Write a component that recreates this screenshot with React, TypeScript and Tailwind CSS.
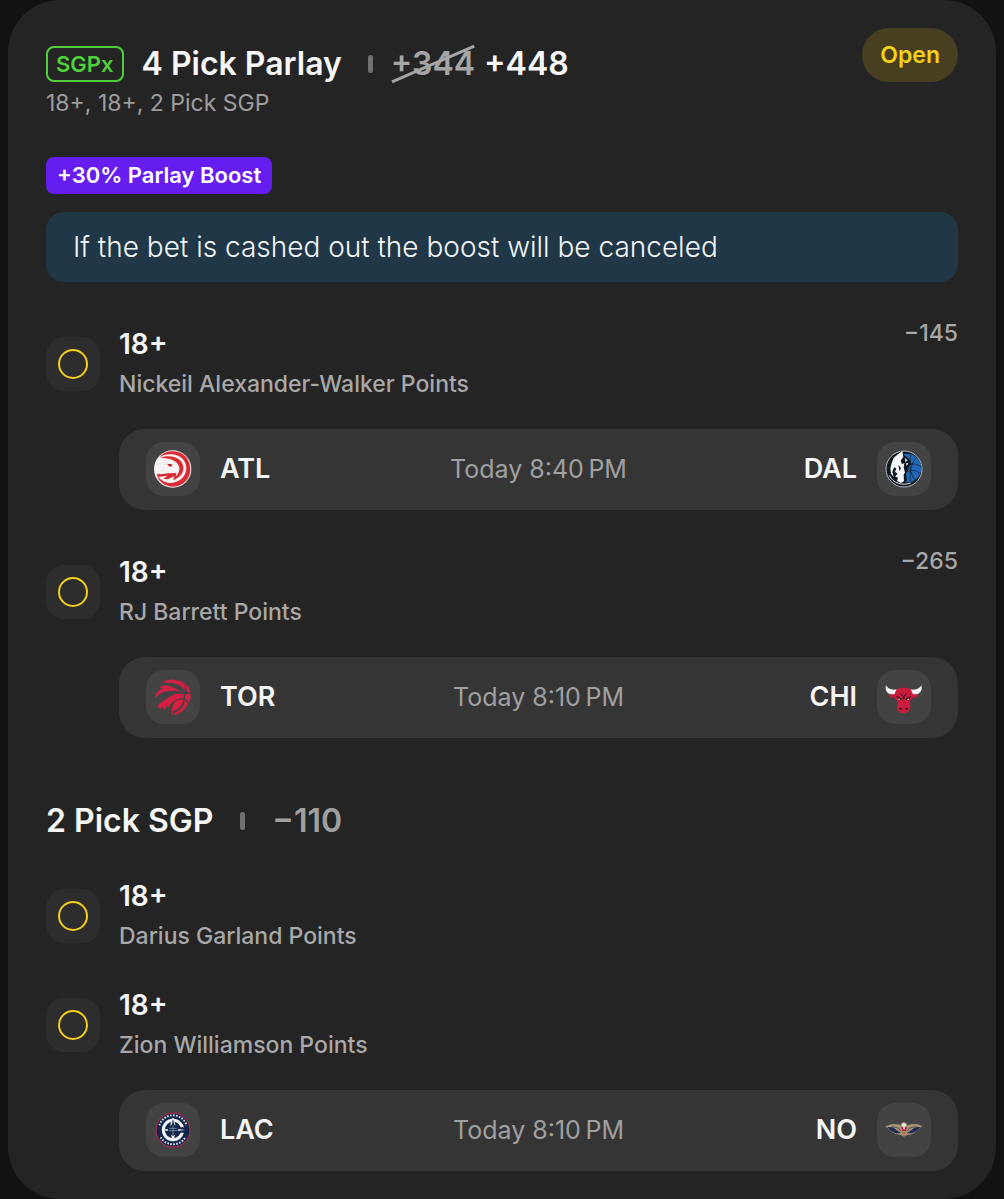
import type { ReactNode } from 'react';

type TeamCode = 'ATL' | 'DAL' | 'TOR' | 'CHI' | 'LAC' | 'NO';

interface Game {
  away: TeamCode;
  home: TeamCode;
  time: string;
}

interface Leg {
  pick: string;
  market: string;
  odds?: string;
  game?: Game;
}

const singles: Leg[] = [
  {
    pick: '18+',
    market: 'Nickeil Alexander-Walker Points',
    odds: '−145',
    game: { away: 'ATL', home: 'DAL', time: 'Today 8:40\u202fPM' },
  },
  {
    pick: '18+',
    market: 'RJ Barrett Points',
    odds: '−265',
    game: { away: 'TOR', home: 'CHI', time: 'Today 8:10\u202fPM' },
  },
];

const sgpLegs: Leg[] = [
  { pick: '18+', market: 'Darius Garland Points' },
  {
    pick: '18+',
    market: 'Zion Williamson Points',
    game: { away: 'LAC', home: 'NO', time: 'Today 8:10\u202fPM' },
  },
];

// All logos share the same 162x162 artboard, centred on 101,102.
const logos: Record<TeamCode, ReactNode> = {
  ATL: (
    <>
      <circle cx="100" cy="102" r="56" fill="#f6f2f2" />
      <path
        d="M60 67 C71 53 87 48 103 49 C132 50 153 73 153 103 C153 132 130 155 101 155 C79 155 61 143 53 124 L60 129 C69 139 81 144 95 144 C121 143 141 124 141 100 C141 76 122 59 97 58 C83 57 70 60 60 67Z"
        fill="#dc2a33"
      />
      <path
        d="M64 68 C98 56 131 72 132 97 C133 116 122 127 102 136 L105 123 L86 133 L72 131 L85 122 L57 126 C53 122 53 119 54 116 C68 120 78 114 92 115 L111 114 L109 124 C116 118 121 109 120 99 C118 82 102 70 64 68Z"
        fill="#dc2a33"
      />
      <path d="M83 86 L99 88 L96 95 L89 94Z" fill="#c5202d" />
    </>
  ),
  DAL: (
    <>
      <circle cx="101" cy="102" r="55" fill="#101820" />
      <circle cx="101" cy="102" r="54" fill="none" stroke="#b8bec4" strokeWidth="3" />
      <circle cx="110" cy="99" r="43" fill="#2069b8" />
      <path
        d="M122 59 C116 76 117 120 135 134 M139 68 C125 80 117 104 120 139 M111 92 C125 84 140 86 153 96 M111 111 C125 102 139 107 148 115"
        fill="none"
        stroke="#101820"
        strokeWidth="2"
      />
      <path
        d="M92 49 L102 61 L119 74 L123 88 L116 94 L113 107 L107 116 L110 136 L99 149 L78 144 L62 130 L52 107 L57 80 L72 62Z"
        fill="#101820"
      />
      <path
        d="M96 48 L99 65 L91 77 L95 88 L102 84 L100 98 L104 112 L100 120 L101 139 L92 144 L80 138 L83 128 L74 124 L82 117 L74 110 L78 101 L72 96 L66 110 L70 126 L62 116 L60 100 L64 84 L70 68 L83 58Z"
        fill="#f6f7f8"
      />
      <path d="M103 68 L112 76 L105 82Z M108 84 L115 85 L108 94Z" fill="#c9ced3" />
      <path d="M84 90 L92 98 L88 109Z" fill="#101820" />
      <path d="M57 121 C67 145 98 153 121 144" fill="none" stroke="#e0e4e8" strokeWidth="3" />
    </>
  ),
  TOR: (
    <g fill="#d31f42">
      <path d="M46 108 C49 86 60 80 70 77 L61 72 C72 66 84 67 96 71 C108 75 116 79 123 86 C94 80 63 83 46 108Z" />
      <path d="M65 59 C90 44 114 48 130 60 C137 66 139 74 136 84 C127 66 105 56 65 59Z" />
      <path d="M120 51 C140 59 151 74 154 90 L143 87 C144 73 136 60 120 51Z" />
      <path d="M55 128 C62 118 80 110 95 99 C108 91 122 90 134 93 L132 106 C116 105 104 113 91 126 L92 134 L82 130 L75 140 L68 132 L59 137Z" />
      <path d="M139 92 L154 94 C155 103 152 113 148 119 L137 107Z" />
      <path d="M107 116 C116 108 124 109 132 111 C131 125 119 138 100 146 L105 157 L96 151 C99 136 99 124 107 116Z" />
      <path d="M136 112 L146 123 C138 141 121 153 105 156 L107 148 C123 142 135 130 136 112Z" />
    </g>
  ),
  CHI: (
    <>
      <path
        d="M47 67 C42 84 53 96 71 96 L84 94 L82 79 C64 82 54 79 47 67Z M153 67 C158 84 147 96 129 96 L116 94 L118 79 C136 82 146 79 153 67Z"
        fill="#f6f4f4"
      />
      <path
        d="M79 78 C90 73 110 73 121 78 L128 94 L145 94 L140 103 L128 104 L119 115 L120 133 C118 145 109 151 100 151 C91 151 82 145 80 133 L81 115 L72 104 L60 103 L55 94 L72 94Z"
        fill="#c91c3d"
      />
      <path
        d="M79 98 L94 107 L92 112 L80 105Z M121 98 L106 107 L108 112 L120 105Z M86 89 L98 101 L97 108 L100 112 L103 108 L102 101 L114 89 L103 96 L100 101 L97 96Z"
        fill="#38101b"
      />
      <path d="M84 106 L90 110 L85 111Z M116 106 L110 110 L115 111Z" fill="#fff" />
      <ellipse cx="91" cy="137" rx="4" ry="3" fill="#38101b" />
      <ellipse cx="109" cy="137" rx="4" ry="3" fill="#38101b" />
    </>
  ),
  LAC: (
    <>
      <circle cx="101" cy="102" r="51" fill="#10264b" stroke="#c8254c" strokeWidth="3" />
      {/* lettering round the badge is too small to read, so it is dashes */}
      <path
        d="M60 88 A43 43 0 0 1 142 88 M64 124 A43 43 0 0 0 138 124"
        fill="none"
        stroke="#d5dae3"
        strokeWidth="6"
        strokeDasharray="5 4"
      />
      <circle cx="101" cy="102" r="29" fill="none" stroke="#f3f5f8" strokeWidth="9" />
      <path d="M122 94 H139 V110 H122Z" fill="#10264b" />
      <path d="M66 102 L90 98 L98 67 L104 67 L110 98 L137 102 L110 106 L101 137 L92 106Z" fill="#eef1f5" />
      <path
        d="M85 102 L89 92 L98 85 L100 71 L102 71 L104 85 L112 92 L117 102 L111 113 L101 120 L91 113Z"
        fill="#10264b"
      />
      <path d="M89 97 H113 M88 104 H114 M101 88 V117" stroke="#9ba9bf" strokeWidth="2" />
    </>
  ),
  NO: (
    <>
      <path
        d="M45 92 C58 83 75 82 91 87 L95 80 L101 78 L108 82 L111 88 C127 82 143 83 156 91 C145 97 139 109 124 115 L108 118 L101 122 L93 118 L77 114 C62 109 57 98 45 92Z"
        fill="#a59472"
      />
      <path
        d="M51 93 L67 94 L92 112 L78 112 C64 108 58 101 51 93Z M150 93 L135 94 L110 112 L123 112 C137 108 143 101 150 93Z"
        fill="#1c2a5c"
      />
      <path
        d="M66 92 L84 96 L92 106 M136 92 L118 96 L110 106"
        fill="none"
        stroke="#302f3b"
        strokeWidth="2"
      />
      <path d="M94 84 L101 81 L108 85 L105 92 H96Z" fill="#eee8e0" />
      <path d="M92 92 L99 94 L101 104 L104 94 L110 92 L107 105 L96 105Z" fill="#bd1645" />
      <path d="M98 94 H104 L101 102Z" fill="#fff" />
      <path d="M95 107 H107 L105 116 L101 120 L96 115Z" fill="#b2735b" />
    </>
  ),
};

function TeamLogo({ team }: { team: TeamCode }) {
  return (
    <span className="size-[54px] shrink-0 overflow-hidden rounded-[18px] bg-[#434343]">
      <svg viewBox="20 21 162 162" className="size-full" role="img" aria-label={`${team} logo`}>
        {logos[team]}
      </svg>
    </span>
  );
}

function GameCard({ game }: { game: Game }) {
  return (
    <div className="mt-[17px] ml-[73px] grid grid-cols-[1fr_auto_1fr] items-center rounded-[26px] bg-[#353535] px-[27px] pt-[13px] pb-[14px]">
      <div className="flex items-center gap-5">
        <TeamLogo team={game.away} />
        <span className="text-[27px] leading-[42px] font-semibold text-[#f5f5f5]">{game.away}</span>
      </div>
      <time className="text-[25px] leading-[42px] text-[#a0a0a0]">{game.time}</time>
      <div className="flex items-center justify-end gap-5">
        <span className="text-[27px] leading-[42px] font-semibold text-[#f5f5f5]">{game.home}</span>
        <TeamLogo team={game.home} />
      </div>
    </div>
  );
}

function LegRow({ leg }: { leg: Leg }) {
  return (
    <li>
      <div className="flex items-center gap-[19px]">
        <span className="flex size-[54px] shrink-0 items-center justify-center rounded-[18px] bg-[#2d2d2d]">
          <span className="size-[30px] rounded-full border-2 border-[#f5ce1b]" />
        </span>
        <div className="flex-1 py-2">
          <h3 className="text-[28px] leading-10 font-semibold text-[#f5f5f5]">{leg.pick}</h3>
          <p className="text-[23px] leading-10 font-medium text-[#a8a8a8]">{leg.market}</p>
        </div>
        {leg.odds && (
          <span className="self-start text-[23px] leading-[34px] font-medium text-[#a8a8a8]">
            {leg.odds}
          </span>
        )}
      </div>
      {leg.game && <GameCard game={leg.game} />}
    </li>
  );
}

function Divider() {
  return <span className="h-[18px] w-[5px] shrink-0 rounded-sm bg-[#707070]" />;
}

export default function App() {
  return (
    <main className="bg-[#121212] px-2 font-['Inter',sans-serif]">
      <article className="rounded-[52px] bg-[#242424] px-[38px] pt-7 pb-7">
        <header className="flex items-start justify-between">
          <div className="pt-4">
            <div className="flex h-10 items-center">
              <span className="rounded-lg border-2 border-[#50cf3b] px-2 text-[22px] leading-8 font-semibold text-[#50cf3b]">
                SGPx
              </span>
              <h1 className="ml-[18px] text-[32px] leading-[42px] font-semibold text-[#f7f7f7]">
                4 Pick Parlay
              </h1>
              <span className="mr-[18px] ml-[26px] flex">
                <Divider />
              </span>
              <span className="flex gap-[9px] text-[32px] leading-[42px] font-semibold">
                <s className="relative text-[#a5a5a5] no-underline">
                  +344
                  <svg
                    viewBox="0 0 84 40"
                    preserveAspectRatio="none"
                    className="absolute inset-0 size-full overflow-visible"
                    aria-hidden="true"
                  >
                    <path d="M1 37 L83 3" stroke="#a5a5a5" strokeWidth="3" />
                  </svg>
                </s>
                <span className="text-[#f7f7f7]">+448</span>
              </span>
            </div>
            <p className="text-[23px] leading-[38px] text-[#9d9d9d]">18+, 18+, 2 Pick SGP</p>
          </div>
          <span className="rounded-full bg-[#473f1f] px-[18px] text-[23px] leading-[54px] font-semibold text-[#f7d116]">
            Open
          </span>
        </header>

        <div className="mt-[35px] flex">
          <span className="rounded-lg bg-[#651df0] px-[11px] text-[22px] leading-[37px] font-semibold text-white">
            +30% Parlay Boost
          </span>
        </div>
        <p className="mt-[18px] rounded-[18px] bg-[#203747] px-[27px] text-[28px] leading-[70px] font-[340] text-[#f3f6f8]">
          If the bet is cashed out the boost will be canceled
        </p>

        <ul className="mt-[34px] flex flex-col gap-[34px]">
          {singles.map((leg) => (
            <LegRow key={leg.market} leg={leg} />
          ))}
        </ul>

        <section className="mt-[62px]">
          <div className="flex items-center text-[32px] leading-[42px] font-semibold">
            <h2 className="text-[#f7f7f7]">2 Pick SGP</h2>
            <span className="mx-[27px] flex">
              <Divider />
            </span>
            <span className="text-[#a0a0a0]">−110</span>
          </div>
          <ul className="mt-[26px] flex flex-col gap-[13px]">
            {sgpLegs.map((leg) => (
              <LegRow key={leg.market} leg={leg} />
            ))}
          </ul>
        </section>
      </article>
    </main>
  );
}
